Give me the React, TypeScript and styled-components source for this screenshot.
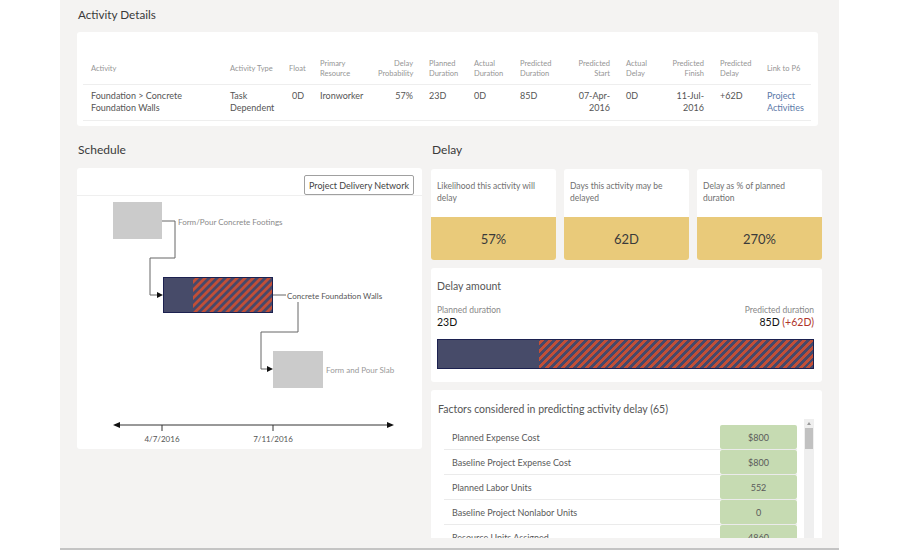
import React from 'react'
import styled, { createGlobalStyle } from 'styled-components'

const GlobalStyle = createGlobalStyle`
  html, body {
    margin: 0;
    padding: 0;
    background: #fff;
  }
  body {
    font-family: Lato, "Open Sans", sans-serif;
    color: #333;
  }
`

const NAVY = '#474b69'
const NAVY_EDGE = '#1c2150'
const RUST = '#c24f37'

const stripes = `repeating-linear-gradient(135deg, ${RUST} 0 2.8px, #45496b 2.8px 5.6px)`

const Page = styled.div`
  width: 779px;
  height: 550px;
  margin-left: 60px;
  padding: 0 17px;
  box-sizing: border-box;
  background: #f4f3f2;
  border-bottom: 2px solid #c4c4c4;
  overflow: hidden;
`

const PageTitle = styled.h1`
  margin: 0;
  height: 32px;
  padding: 6px 1px 0;
  box-sizing: border-box;
  font-size: 11.7px;
  font-weight: 400;
  line-height: 16px;
  color: #3a3a3a;
`

const Card = styled.div`
  background: #fff;
  border-radius: 3px;
`

const DetailsCard = styled(Card)`
  margin-right: 4px;
  padding: 22px 6px 5px;
`

const Table = styled.table`
  width: 728px;
  border-collapse: collapse;
  table-layout: fixed;
`

const Th = styled.th<{ $align: string }>`
  height: 30px;
  padding: 0 8px;
  border-bottom: 1px solid #eee;
  font-size: 7.5px;
  font-weight: 400;
  line-height: 10px;
  color: #959595;
  text-align: ${(p) => p.$align};
  vertical-align: middle;
  white-space: nowrap;
`

const Td = styled.td<{ $align: string }>`
  padding: 5px 8px 6px;
  border-bottom: 1px solid #eee;
  font-size: 9px;
  line-height: 12px;
  color: #555;
  text-align: ${(p) => p.$align};
  vertical-align: top;
  white-space: nowrap;
`

const CellLink = styled.span`
  color: #5b79a8;
`

const Columns = styled.div`
  display: grid;
  grid-template-columns: 345px 391px;
  gap: 9px;
`

const Column = styled.div`
  display: flex;
  flex-direction: column;
`

const SectionTitle = styled.h2`
  margin: 0;
  padding: 15px 1px 10px;
  font-size: 12px;
  font-weight: 400;
  line-height: 17px;
  color: #3a3a3a;
`

const ScheduleCard = styled(Card)`
  height: 281px;
  display: flex;
  flex-direction: column;
`

const Toolbar = styled.div`
  height: 28px;
  box-sizing: border-box;
  padding: 7px 8px 0;
  display: flex;
  justify-content: flex-end;
  align-items: flex-start;
  border-bottom: 1px solid #efefef;
`

const ToolButton = styled.button`
  height: 20px;
  padding: 0 4px;
  border: 1px solid #a0a0a0;
  border-radius: 2px;
  background: #fff;
  font-family: inherit;
  font-size: 9px;
  color: #444;
`

const Diagram = styled.svg`
  display: block;
  font-family: Lato, "Open Sans", sans-serif;
`

const RightStack = styled.div`
  display: flex;
  flex-direction: column;
  gap: 8px;
  margin-top: 1px;
`

const StatGrid = styled.div`
  display: grid;
  grid-template-columns: repeat(3, 1fr);
  gap: 8px;
`

const StatCard = styled(Card)`
  overflow: hidden;
  display: flex;
  flex-direction: column;
`

const StatLabel = styled.div`
  height: 48px;
  box-sizing: border-box;
  padding: 11px 6px 0;
  font-size: 8.5px;
  line-height: 12px;
  color: #707070;
`

const StatValue = styled.div`
  height: 43px;
  display: flex;
  align-items: center;
  justify-content: center;
  background: #e9ca7a;
  font-size: 13px;
  color: #3a3a3a;
`

const AmountCard = styled(Card)`
  padding: 10px 8px 13px 6px;
`

const CardTitle = styled.div`
  font-size: 10.5px;
  line-height: 16px;
  color: #555;
`

const DurationRow = styled.div`
  display: flex;
  justify-content: space-between;
  margin-top: 11px;
`

const DurationBlock = styled.div<{ $right?: boolean }>`
  display: flex;
  flex-direction: column;
  align-items: ${(p) => (p.$right ? 'flex-end' : 'flex-start')};
`

const DurationLabel = styled.span`
  font-size: 8.5px;
  line-height: 11px;
  color: #888;
`

const DurationValue = styled.span`
  font-size: 10.5px;
  line-height: 13px;
  color: #111;
`

const Overrun = styled.span`
  color: #b0352a;
`

const DurationBar = styled.div`
  margin-top: 10px;
  height: 30px;
  box-sizing: border-box;
  border: 1px solid ${NAVY_EDGE};
  background: ${stripes};
  display: flex;
`

const PlannedFill = styled.div`
  height: 100%;
  background: ${NAVY};
`

const FactorsCard = styled(Card)`
  height: 148px;
  border-radius: 3px 3px 0 0;
  display: flex;
  flex-direction: column;
`

const FactorsTitle = styled(CardTitle)`
  padding: 11px 7px 0;
`

const FactorsBody = styled.div`
  flex: 1;
  margin: 2px 8px 0 13px;
  display: flex;
  gap: 7px;
  overflow: hidden;
`

const FactorList = styled.div`
  flex: 1;
  padding-top: 6px;
`

const FactorRow = styled.div`
  height: 25px;
  box-sizing: border-box;
  display: flex;
  border-bottom: 1px solid #ebebeb;
`

const FactorName = styled.div`
  flex: 1;
  padding-left: 8px;
  display: flex;
  align-items: center;
  font-size: 9px;
  color: #5a5a5a;
`

const FactorValue = styled.div`
  width: 77px;
  display: flex;
  align-items: center;
  justify-content: center;
  background: #c6dbb2;
  border-radius: 2px;
  font-size: 9px;
  color: #5a5a5a;
`

const ScrollTrack = styled.div`
  width: 10px;
  background: #efefef;
  display: flex;
  flex-direction: column;
  align-items: center;
`

const ScrollArrow = styled.div`
  width: 0;
  height: 0;
  margin: 3px 0 3px;
  border-left: 2px solid transparent;
  border-right: 2px solid transparent;
  border-bottom: 3px solid #999;
`

const ScrollThumb = styled.div`
  width: 8px;
  height: 21px;
  background: #c1c1c1;
`

type Col = { label: string[]; width: number; align: 'left' | 'right'; value: string[]; link?: boolean }

const columns: Col[] = [
  { label: ['Activity'], width: 139, align: 'left', value: ['Foundation > Concrete', 'Foundation Walls'] },
  { label: ['Activity Type'], width: 59, align: 'left', value: ['Task', 'Dependent'] },
  { label: ['Float'], width: 31, align: 'right', value: ['0D'] },
  { label: ['Primary', 'Resource'], width: 58, align: 'left', value: ['Ironworker'] },
  { label: ['Delay', 'Probability'], width: 51, align: 'right', value: ['57%'] },
  { label: ['Planned', 'Duration'], width: 45, align: 'left', value: ['23D'] },
  { label: ['Actual', 'Duration'], width: 46, align: 'left', value: ['0D'] },
  { label: ['Predicted', 'Duration'], width: 53, align: 'left', value: ['85D'] },
  { label: ['Predicted', 'Start'], width: 53, align: 'right', value: ['07-Apr-', '2016'] },
  { label: ['Actual', 'Delay'], width: 42, align: 'left', value: ['0D'] },
  { label: ['Predicted', 'Finish'], width: 52, align: 'right', value: ['11-Jul-', '2016'] },
  { label: ['Predicted', 'Delay'], width: 47, align: 'left', value: ['+62D'] },
  { label: ['Link to P6'], width: 52, align: 'left', value: ['Project', 'Activities'], link: true },
]

const stats = [
  { label: 'Likelihood this activity will delay', value: '57%' },
  { label: 'Days this activity may be delayed', value: '62D' },
  { label: 'Delay as % of planned duration', value: '270%' },
]

const factors = [
  { name: 'Planned Expense Cost', value: '$800' },
  { name: 'Baseline Project Expense Cost', value: '$800' },
  { name: 'Planned Labor Units', value: '552' },
  { name: 'Baseline Project Nonlabor Units', value: '0' },
  { name: 'Resource Units Assigned', value: '4860' },
  { name: 'Planned Nonlabor Units', value: '0' },
]

const planned = 23
const predicted = 85

const Lines = ({ lines }: { lines: string[] }) => (
  <>
    {lines.map((l, i) => (
      <React.Fragment key={i}>
        {i > 0 && <br />}
        {l}
      </React.Fragment>
    ))}
  </>
)

const NetworkDiagram = () => (
  <Diagram width={345} height={252} viewBox="0 0 345 252">
    <defs>
      <pattern id="walls" patternUnits="userSpaceOnUse" width="5.66" height="8" patternTransform="rotate(45)">
        <rect width="2.83" height="8" fill={RUST} />
        <rect x="2.83" width="2.83" height="8" fill="#45496b" />
      </pattern>
    </defs>

    <rect x="36" y="6" width="49" height="37" fill="#cbcbcb" />
    <text x="101" y="28.5" fontSize="8" fill="#8a8a8a">Form/Pour Concrete Footings</text>
    <polyline points="85,25 98,25 98,62 73,62 73,99 81,99" fill="none" stroke="#666" strokeWidth="1" />
    <polygon points="86,99 80,96 80,102" fill="#111" />

    <rect x="86.5" y="81.5" width="109" height="35" fill="url(#walls)" stroke={NAVY_EDGE} strokeWidth="1" />
    <rect x="87" y="82" width="29" height="34" fill={NAVY} />
    <line x1="196" y1="99" x2="209" y2="99" stroke="#666" strokeWidth="1" />
    <text x="210" y="102.5" fontSize="8" fill="#555">Concrete Foundation Walls</text>

    <polyline points="221,106 221,136 184,136 184,173 191,173" fill="none" stroke="#666" strokeWidth="1" />
    <polygon points="196,173 190,170 190,176" fill="#111" />
    <rect x="196" y="155" width="50" height="37" fill="#cbcbcb" />
    <text x="249" y="176.5" fontSize="8" fill="#999">Form and Pour Slab</text>

    <line x1="40" y1="229" x2="313" y2="229" stroke="#333" strokeWidth="1" />
    <polygon points="36,229 43,226 43,232" fill="#111" />
    <polygon points="317,229 310,226 310,232" fill="#111" />
    <line x1="85" y1="229" x2="85" y2="235" stroke="#333" strokeWidth="1" />
    <line x1="196" y1="229" x2="196" y2="235" stroke="#333" strokeWidth="1" />
    <text x="85" y="245.5" fontSize="8" fill="#555" textAnchor="middle">4/7/2016</text>
    <text x="196" y="245.5" fontSize="8" fill="#555" textAnchor="middle">7/11/2016</text>
  </Diagram>
)

export default function App() {
  return (
    <>
      <GlobalStyle />
      <Page>
        <PageTitle>Activity Details</PageTitle>
        <DetailsCard>
          <Table>
            <colgroup>
              {columns.map((c, i) => (
                <col key={i} style={{ width: c.width }} />
              ))}
            </colgroup>
            <thead>
              <tr>
                {columns.map((c, i) => (
                  <Th key={i} $align={c.align}>
                    <Lines lines={c.label} />
                  </Th>
                ))}
              </tr>
            </thead>
            <tbody>
              <tr>
                {columns.map((c, i) => (
                  <Td key={i} $align={c.align}>
                    {c.link ? (
                      <CellLink>
                        <Lines lines={c.value} />
                      </CellLink>
                    ) : (
                      <Lines lines={c.value} />
                    )}
                  </Td>
                ))}
              </tr>
            </tbody>
          </Table>
        </DetailsCard>

        <Columns>
          <Column>
            <SectionTitle>Schedule</SectionTitle>
            <ScheduleCard>
              <Toolbar>
                <ToolButton>Project Delivery Network</ToolButton>
              </Toolbar>
              <NetworkDiagram />
            </ScheduleCard>
          </Column>

          <Column>
            <SectionTitle>Delay</SectionTitle>
            <RightStack>
              <StatGrid>
                {stats.map((s) => (
                  <StatCard key={s.label}>
                    <StatLabel>{s.label}</StatLabel>
                    <StatValue>{s.value}</StatValue>
                  </StatCard>
                ))}
              </StatGrid>

              <AmountCard>
                <CardTitle>Delay amount</CardTitle>
                <DurationRow>
                  <DurationBlock>
                    <DurationLabel>Planned duration</DurationLabel>
                    <DurationValue>{planned}D</DurationValue>
                  </DurationBlock>
                  <DurationBlock $right>
                    <DurationLabel>Predicted duration</DurationLabel>
                    <DurationValue>
                      {predicted}D <Overrun>(+{predicted - planned}D)</Overrun>
                    </DurationValue>
                  </DurationBlock>
                </DurationRow>
                <DurationBar>
                  <PlannedFill style={{ width: `${(planned / predicted) * 100}%` }} />
                </DurationBar>
              </AmountCard>

              <FactorsCard>
                <FactorsTitle>Factors considered in predicting activity delay (65)</FactorsTitle>
                <FactorsBody>
                  <FactorList>
                    {factors.map((f) => (
                      <FactorRow key={f.name}>
                        <FactorName>{f.name}</FactorName>
                        <FactorValue>{f.value}</FactorValue>
                      </FactorRow>
                    ))}
                  </FactorList>
                  <ScrollTrack>
                    <ScrollArrow />
                    <ScrollThumb />
                  </ScrollTrack>
                </FactorsBody>
              </FactorsCard>
            </RightStack>
          </Column>
        </Columns>
      </Page>
    </>
  )
}
